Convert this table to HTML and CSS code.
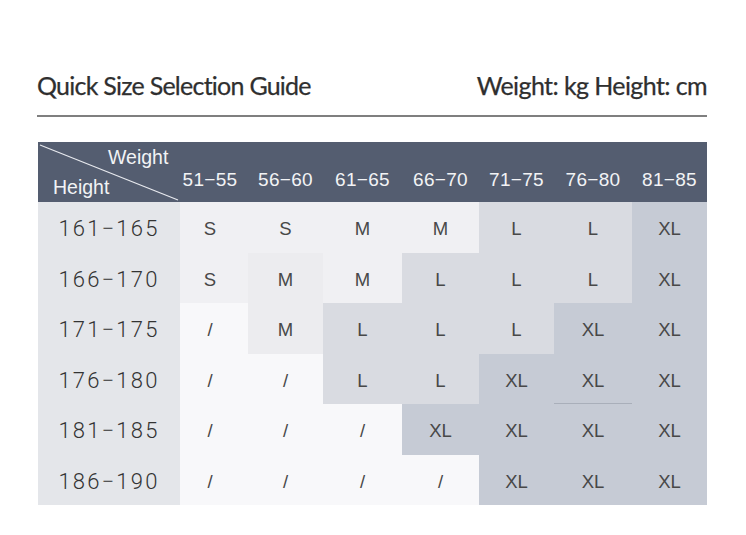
FILE: index.html
```html
<!DOCTYPE html>
<html lang="en">
<head>
<meta charset="utf-8">
<title>Quick Size Selection Guide</title>
<link rel="stylesheet" href="styles.css">
</head>
<body>
<div class="page">
  <div class="head">
    <h1 class="title">Quick Size Selection Guide</h1>
    <div class="units">Weight: kg Height: cm</div>
  </div>
  <div class="rule"></div>
  <div class="chart">
    <div class="corner">
      <svg class="diag" viewBox="0 0 142 60" preserveAspectRatio="none"><line x1="2" y1="3" x2="140" y2="58" stroke="#e8eaef" stroke-width="1.2"/></svg>
      <span class="corner-w">Weight</span>
      <span class="corner-h">Height</span>
    </div>
    <div class="wh first">51−55</div><div class="wh">56−60</div><div class="wh">61−65</div><div class="wh">66−70</div><div class="wh">71−75</div><div class="wh">76−80</div><div class="wh">81−85</div>

    <div class="hh">161−165</div>
    <div class="c sm first">S</div><div class="c sm">S</div><div class="c sm">M</div><div class="c sm">M</div><div class="c l">L</div><div class="c l">L</div><div class="c xl">XL</div>

    <div class="hh">166−170</div>
    <div class="c sm first">S</div><div class="c sm2">M</div><div class="c sm">M</div><div class="c l">L</div><div class="c l">L</div><div class="c l">L</div><div class="c xl">XL</div>

    <div class="hh">171−175</div>
    <div class="c na first">/</div><div class="c sm2">M</div><div class="c l">L</div><div class="c l">L</div><div class="c l">L</div><div class="c xl">XL</div><div class="c xl">XL</div>

    <div class="hh">176−180</div>
    <div class="c na first">/</div><div class="c na">/</div><div class="c l">L</div><div class="c l">L</div><div class="c xl">XL</div><div class="c xl mark">XL</div><div class="c xl">XL</div>

    <div class="hh">181−185</div>
    <div class="c na first">/</div><div class="c na">/</div><div class="c na">/</div><div class="c xl">XL</div><div class="c xl">XL</div><div class="c xl">XL</div><div class="c xl">XL</div>

    <div class="hh">186−190</div>
    <div class="c na first">/</div><div class="c na">/</div><div class="c na">/</div><div class="c na">/</div><div class="c xl">XL</div><div class="c xl">XL</div><div class="c xl">XL</div>
  </div>
</div>
</body>
</html>
```
FILE: styles.css
```css
html, body {
  margin: 0;
  padding: 0;
  background: #ffffff;
}
body {
  font-family: "Liberation Sans", Arial, sans-serif;
  color: #3a3a3a;
}
.page {
  width: 746px;
  height: 535px;
  padding: 70px 0 0 37px;
  box-sizing: border-box;
}
.head {
  width: 670px;
  display: flex;
  justify-content: space-between;
  align-items: baseline;
  height: 30px;
}
.title {
  margin: 0;
  font-family: Lato, sans-serif;
  font-weight: 400;
  font-size: 25px;
  letter-spacing: -0.75px;
  color: #2f2f2f;
  line-height: 30px;
  -webkit-text-stroke: 0.25px #2f2f2f;
}
.units {
  font-family: Lato, sans-serif;
  font-size: 25px;
  letter-spacing: -0.6px;
  color: #2f2f2f;
  line-height: 30px;
  -webkit-text-stroke: 0.25px #2f2f2f;
}
.rule {
  width: 670px;
  height: 2px;
  background: #7f7f7f;
  margin-top: 15px;
}
.chart {
  margin-top: 25px;
  margin-left: 1px;
  display: grid;
  grid-template-columns: 142px 68px 75px 79px 77px 75px 78px 75px;
  grid-template-rows: 60px repeat(6, 50.5px);
  width: 669px;
}
.corner {
  position: relative;
  background: #545d70;
  color: #f2f3f5;
  font-size: 19.5px;
}
.diag {
  position: absolute;
  left: 0;
  top: 0;
  width: 100%;
  height: 100%;
}
.corner-w {
  position: absolute;
  left: 70px;
  top: 4px;
}
.corner-h {
  position: absolute;
  left: 15px;
  top: 34px;
}
.wh {
  background: #545d70;
  color: #f2f3f5;
  font-size: 19px;
  display: flex;
  align-items: center;
  justify-content: center;
  padding-top: 16px;
  box-sizing: border-box;
  letter-spacing: 0.3px;
}
.hh {
  background: #e4e6ea;
  display: flex;
  align-items: center;
  justify-content: center;
  font-family: Roboto, "Liberation Sans", sans-serif;
  font-weight: 300;
  font-size: 22px;
  letter-spacing: 2.2px;
  color: #333333;
  padding-top: 3px;
  box-sizing: border-box;
}
.c {
  display: flex;
  align-items: center;
  justify-content: center;
  font-size: 18.5px;
  color: #484848;
  padding-top: 4px;
  box-sizing: border-box;
}
.first { padding-right: 8px; }
.na { background: #f8f8fa; }
.sm { background: #f0f0f3; }
.sm2 { background: #ececef; }
.l { background: #d9dbe1; }
.xl { background: #c6cbd5; }
.mark { box-shadow: inset 0 -1px 0 #a9afba; }
```
